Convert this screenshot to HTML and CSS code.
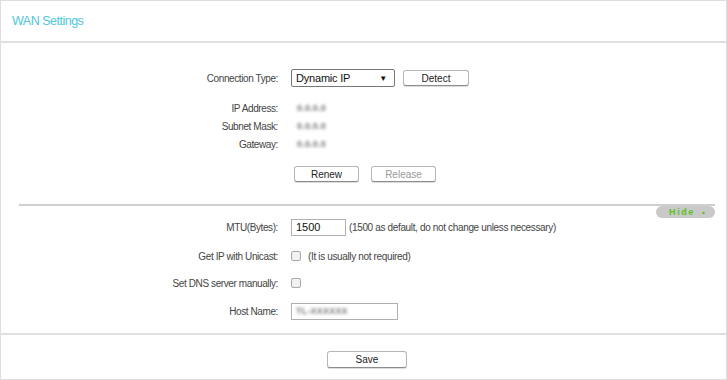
FILE: index.html
```html
<!DOCTYPE html>
<html lang="en">
<head>
  <meta charset="UTF-8" />
  <title>WAN Settings</title>
  <link rel="stylesheet" href="styles.css">
</head>
<body>
  <div class="page">
    <!-- Header -->
    <div class="header">
      <h2>WAN Settings</h2>
    </div>

    <!-- Main form -->
    <div class="main">
      <div class="row row-conn">
        <label>Connection Type:</label>
        <div class="field">
          <div class="select">
            <span>Dynamic IP</span>
            <span class="arrow">&#9660;</span>
          </div>
          <button class="btn btn-detect">Detect</button>
        </div>
      </div>

      <div class="row row-info first">
        <label>IP Address:</label>
        <div class="field"><span class="blur">0.0.0.0</span></div>
      </div>
      <div class="row row-info">
        <label>Subnet Mask:</label>
        <div class="field"><span class="blur">0.0.0.0</span></div>
      </div>
      <div class="row row-info">
        <label>Gateway:</label>
        <div class="field"><span class="blur">0.0.0.0</span></div>
      </div>

      <div class="row row-btns">
        <label></label>
        <div class="field">
          <button class="btn btn-renew">Renew</button>
          <button class="btn btn-release" disabled>Release</button>
        </div>
      </div>

      <div class="separator">
        <span class="hide-pill">Hide <span class="caret">&#9650;</span></span>
      </div>

      <div class="row row-mtu">
        <label>MTU(Bytes):</label>
        <div class="field">
          <div class="text-input mtu">1500</div>
          <span class="hint">(1500 as default, do not change unless necessary)</span>
        </div>
      </div>

      <div class="row row-unicast">
        <label>Get IP with Unicast:</label>
        <div class="field">
          <span class="checkbox"></span>
          <span class="hint">(It is usually not required)</span>
        </div>
      </div>

      <div class="row row-dns">
        <label>Set DNS server manually:</label>
        <div class="field"><span class="checkbox"></span></div>
      </div>

      <div class="row row-host">
        <label>Host Name:</label>
        <div class="field">
          <div class="text-input host"><span class="blur">TL-XXXXXX</span></div>
        </div>
      </div>
    </div>

    <!-- Footer -->
    <div class="footer">
      <button class="btn btn-save">Save</button>
    </div>
  </div>
</body>
</html>
```

FILE: styles.css
```css
* {
  box-sizing: border-box;
}

body {
  margin: 0;
  font-family: "Liberation Sans", Arial, sans-serif;
  background: #fff;
  color: #333;
}

.page {
  width: 727px;
  height: 380px;
  border: 1px solid #dedede;
  display: flex;
  flex-direction: column;
}

.header {
  height: 42px;
  border-bottom: 2px solid #e0e0e0;
  display: flex;
  align-items: center;
  padding-left: 11px;
}

.header h2 {
  margin: 0;
  font-size: 12.5px;
  font-weight: normal;
  letter-spacing: -0.5px;
  color: #4ec7d9;
}

.main {
  height: 290px;
  padding-top: 25px;
  display: flex;
  flex-direction: column;
}

.row {
  display: flex;
  align-items: center;
  gap: 13px;
}

.row label {
  width: 277px;
  flex-shrink: 0;
  text-align: right;
  font-size: 10px;
  letter-spacing: -0.4px;
  color: #444;
}

.field {
  display: flex;
  align-items: center;
}

.row-conn {
  height: 20px;
}

.row-info {
  height: 18px;
}

.row-info.first {
  margin-top: 11px;
}

.row-info .field {
  padding-left: 6px;
}

.blur {
  filter: blur(1.4px);
  color: #777;
  font-size: 9px;
  font-weight: bold;
  letter-spacing: 0.2px;
}

.select {
  width: 104px;
  height: 18px;
  border: 1px solid #777;
  border-radius: 2px;
  display: flex;
  align-items: center;
  justify-content: space-between;
  padding: 0 7px 0 4px;
  font-size: 11px;
  letter-spacing: -0.2px;
  color: #111;
}

.select .arrow {
  font-size: 8px;
}

.btn {
  height: 16px;
  padding: 0;
  background: #fff;
  border: 1px solid #b5b5b5;
  border-bottom-color: #8c8c8c;
  border-radius: 3px;
  font-family: "Liberation Sans", Arial, sans-serif;
  font-size: 10px;
  color: #222;
  box-shadow: 0 1px 0 #ddd;
}

.btn-detect {
  width: 66px;
  margin-left: 8px;
}

.row-btns {
  margin-top: 13px;
  height: 16px;
}

.btn-renew {
  width: 65px;
  margin-left: 3px;
}

.btn-release {
  width: 65px;
  margin-left: 12px;
  color: #999;
}

.separator {
  position: relative;
  margin: 22px 11px 0 18px;
  border-top: 2px solid #cfcfcf;
}

.hide-pill {
  position: absolute;
  right: 0;
  top: 0;
  width: 59px;
  height: 12px;
  border-radius: 6px;
  background: #c9c9c9;
  color: #58c31c;
  font-size: 9px;
  font-weight: bold;
  letter-spacing: 1.6px;
  display: flex;
  align-items: center;
  justify-content: center;
  gap: 6px;
  padding-left: 4px;
}

.hide-pill .caret {
  font-size: 5px;
  letter-spacing: 0;
}

.row-mtu {
  margin-top: 12px;
  height: 18px;
}

.text-input {
  height: 17px;
  border: 1px solid #b0b0b0;
  display: flex;
  align-items: center;
  padding-left: 4px;
  font-size: 11px;
  color: #111;
}

.text-input.mtu {
  width: 55px;
}

.text-input.host {
  width: 107px;
}

.hint {
  margin-left: 3px;
  font-size: 10px;
  letter-spacing: -0.35px;
  color: #444;
}

.row-unicast {
  margin-top: 11px;
  height: 18px;
}

.row-dns {
  margin-top: 9px;
  height: 18px;
}

.row-host {
  margin-top: 10px;
  height: 18px;
}

.checkbox {
  width: 10px;
  height: 10px;
  border: 1px solid #a8a8a8;
  border-radius: 2px;
  background: #f2f2f2;
  margin-right: 4px;
}

.footer {
  flex: 1;
  border-top: 2px solid #e0e0e0;
  display: flex;
  justify-content: center;
  align-items: flex-start;
  padding-top: 16px;
  padding-left: 7px;
}

.btn-save {
  width: 80px;
  height: 17px;
}
```
